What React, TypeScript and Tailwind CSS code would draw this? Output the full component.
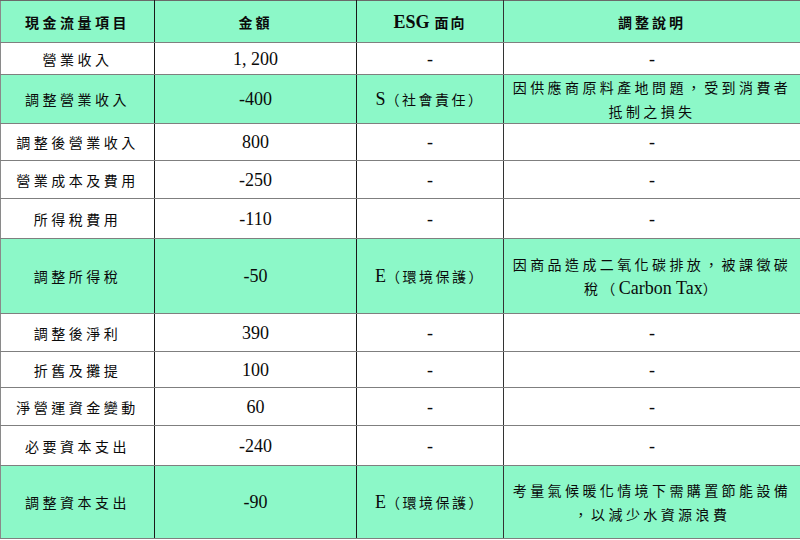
import React from "react";

type Row = {
  item: string;
  amount: string;
  esg: React.ReactNode;
  note: React.ReactNode;
  green: boolean;
  h: string;
};

const L = ({ children, cls = "" }: { children: React.ReactNode; cls?: string }) => (
  <span
    className={`text-[18px] tracking-normal ${cls}`}
    style={{ fontFamily: '"Liberation Serif", "Noto Sans CJK TC", serif' }}
  >
    {children}
  </span>
);

const dash = <L>-</L>;

const rows: Row[] = [
  { item: "營業收入", amount: "1, 200", esg: dash, note: dash, green: false, h: "h-[32px]" },
  {
    item: "調整營業收入",
    amount: "-400",
    esg: (
      <>
        <L>S</L>（社會責任）
      </>
    ),
    note: (
      <>
        因供應商原料產地問題，受到消費者
        <br />
        抵制之損失
      </>
    ),
    green: true,
    h: "h-[49px]",
  },
  { item: "調整後營業收入", amount: "800", esg: dash, note: dash, green: false, h: "h-[37px]" },
  { item: "營業成本及費用", amount: "-250", esg: dash, note: dash, green: false, h: "h-[38px]" },
  { item: "所得稅費用", amount: "-110", esg: dash, note: dash, green: false, h: "h-[40px]" },
  {
    item: "調整所得稅",
    amount: "-50",
    esg: (
      <>
        <L>E</L>（環境保護）
      </>
    ),
    note: (
      <>
        因商品造成二氧化碳排放，被課徵碳
        <br />
        稅（<L cls="tracking-[1px] text-[17px]">Carbon Tax</L>）
      </>
    ),
    green: true,
    h: "h-[75px]",
  },
  { item: "調整後淨利", amount: "390", esg: dash, note: dash, green: false, h: "h-[38px]" },
  { item: "折舊及攤提", amount: "100", esg: dash, note: dash, green: false, h: "h-[36px]" },
  { item: "淨營運資金變動", amount: "60", esg: dash, note: dash, green: false, h: "h-[38px]" },
  { item: "必要資本支出", amount: "-240", esg: dash, note: dash, green: false, h: "h-[40px]" },
  {
    item: "調整資本支出",
    amount: "-90",
    esg: (
      <>
        <L>E</L>（環境保護）
      </>
    ),
    note: (
      <>
        考量氣候暖化情境下需購置節能設備
        <br />
        ，以減少水資源浪費
      </>
    ),
    green: true,
    h: "h-[73px]",
  },
];

const font = { fontFamily: '"Noto Sans CJK TC", "Liberation Serif", sans-serif' };

const cellBase =
  "p-0 text-center align-middle border-b border-b-[#7f7f7f] leading-[24px] text-[14px] text-[#0a0a0a]";

export default function App() {
  return (
    <div className="w-[800px] h-[540px] bg-white overflow-hidden" style={font}>
      <table className="w-[800px] table-fixed border-collapse border-l border-l-[#8a8a8a] border-t border-t-[#6a6a6a]">
        <colgroup>
          <col className="w-[154px]" />
          <col className="w-[202px]" />
          <col className="w-[147px]" />
          <col className="w-[297px]" />
        </colgroup>
        <thead>
          <tr className="bg-[#8cf8c8]">
            <th className={`${cellBase} h-[42px] font-bold tracking-[3.5px] border-r border-r-[#1a1a1a]`}>
              現金流量項目
            </th>
            <th className={`${cellBase} h-[42px] font-bold tracking-[3px] border-r border-r-[#1a1a1a]`}>
              金額
            </th>
            <th className={`${cellBase} h-[42px] font-bold tracking-[2px] border-r border-r-[#333]`}>
              <L cls="font-bold text-[17px]">ESG</L> 面向
            </th>
            <th className={`${cellBase} h-[42px] font-bold tracking-[3px] border-r border-r-[#8a8a8a]`}>
              調整說明
            </th>
          </tr>
        </thead>
        <tbody>
          {rows.map((r, i) => (
            <tr key={i} className={r.green ? "bg-[#8cf8c8]" : "bg-white"}>
              <td className={`${cellBase} ${r.h} tracking-[3.5px] border-r border-r-[#1a1a1a]`}>
                {r.item}
              </td>
              <td className={`${cellBase} ${r.h} border-r border-r-[#1a1a1a]`}>
                <L>{r.amount}</L>
              </td>
              <td className={`${cellBase} ${r.h} tracking-[2.5px] border-r border-r-[#333]`}>{r.esg}</td>
              <td className={`${cellBase} ${r.h} tracking-[3.4px] border-r border-r-[#8a8a8a]`}>
                {r.note}
              </td>
            </tr>
          ))}
        </tbody>
      </table>
    </div>
  );
}
